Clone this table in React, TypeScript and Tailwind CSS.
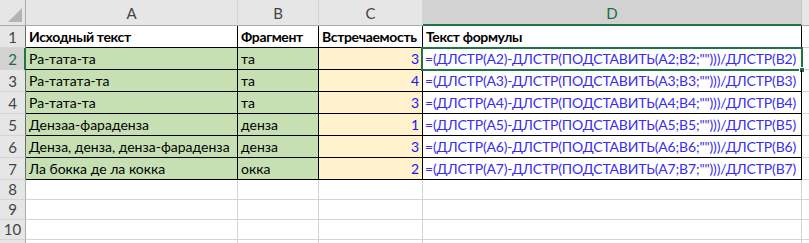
import React from "react";

type Row = { a: string; b: string; c: number; n: number };
const data: Row[] = [
  { a: "Ра-тата-та", b: "та", c: 3, n: 2 },
  { a: "Ра-татата-та", b: "та", c: 4, n: 3 },
  { a: "Ра-тата-та", b: "та", c: 3, n: 4 },
  { a: "Дензаа-фараденза", b: "денза", c: 1, n: 5 },
  { a: "Денза, денза, денза-фараденза", b: "денза", c: 3, n: 6 },
  { a: "Ла бокка де ла кокка", b: "окка", c: 2, n: 7 },
];

function RowHeader({ n, selected, table, h }: { n?: number; selected?: boolean; table?: boolean; h: string }) {
  return (
    <div
      className={`relative w-[26px] shrink-0 ${h} flex items-end justify-center border-b border-b-[#d4d4d4] border-r ${
        table ? "border-r-[#6b6b6b]" : "border-r-[#ababab]"
      } ${selected ? "bg-[#d2d2d2] text-[#1e6b41]" : "bg-[#e6e6e6] text-[#444]"} text-[15px] leading-[18px] pb-[1px]`}
    >
      {n}
      {selected && <div className="absolute right-[-1px] top-0 bottom-[-1px] w-[2px] bg-[#217346]" />}
    </div>
  );
}

const headCell = "shrink-0 border-r border-b border-black flex items-end pl-[3px] pb-[1px] leading-[18px] font-bold tracking-[-0.35px] whitespace-nowrap";

export default function App() {
  return (
    <div className="w-[809px] h-[243px] overflow-hidden bg-white [font-family:Lato,sans-serif] text-[14px] text-black select-none">
      {/* column headers */}
      <div className="flex h-[26px] text-[15px]">
        <div className="relative w-[26px] shrink-0 bg-[#e6e6e6] border-r border-b border-[#ababab]">
          <div
            className="absolute right-[3px] bottom-[3px] w-[14px] h-[14px] bg-[#b4b4b4]"
            style={{ clipPath: "polygon(100% 0, 100% 100%, 0 100%)" }}
          />
        </div>
        {[
          ["A", "w-[212px]"],
          ["B", "w-[81px]"],
          ["C", "w-[104px]"],
        ].map(([l, w]) => (
          <div
            key={l}
            className={`${w} shrink-0 bg-[#e6e6e6] border-r border-r-[#d4d4d4] border-b border-b-[#ababab] flex items-center justify-center text-[#444] pt-[2px]`}
          >
            {l}
          </div>
        ))}
        <div className="w-[379px] shrink-0 bg-[#d2d2d2] border-r border-r-[#c6c6c6] border-b-2 border-b-[#217346] flex items-center justify-center text-[#1e6b41] pt-[3px]">
          D
        </div>
        <div className="flex-1 bg-[#e6e6e6] border-b border-b-[#ababab]" />
      </div>

      {/* row 1 */}
      <div className="flex h-[22px]">
        <RowHeader n={1} table h="h-[22px]" />
        <div className={`w-[212px] ${headCell}`}>Исходный текст</div>
        <div className={`w-[81px] ${headCell}`}>Фрагмент</div>
        <div className={`w-[104px] ${headCell}`}>Встречаемость</div>
        <div className={`w-[379px] ${headCell}`}>Текст формулы</div>
        <div className="flex-1 border-b border-[#d4d4d4]" />
      </div>

      {data.map((r) => (
        <div key={r.n} className="flex h-[22px]">
          <RowHeader n={r.n} table selected={r.n === 2} h="h-[22px]" />
          <div className="w-[212px] shrink-0 bg-[#c6e0b4] border-r border-b border-black flex items-end pl-[3px] pb-[1px] leading-[18px] whitespace-nowrap">
            {r.a}
          </div>
          <div className="w-[81px] shrink-0 bg-[#c6e0b4] border-r border-b border-black flex items-end pl-[3px] pb-[1px] leading-[18px]">
            {r.b}
          </div>
          <div className="w-[104px] shrink-0 bg-[#fff2cc] border-r border-b border-black flex items-end justify-end pr-[3px] pb-[1px] leading-[18px] text-[#1414ff]">
            {r.c}
          </div>
          <div className="relative w-[379px] shrink-0 border-r border-b border-black flex items-end pl-[2px] pb-[1px] leading-[18px] text-[#3a2cf0] whitespace-nowrap tracking-[-0.16px]">
            {`=(ДЛСТР(A${r.n})-ДЛСТР(ПОДСТАВИТЬ(A${r.n};B${r.n};"")))/ДЛСТР(B${r.n})`}
            {r.n === 2 && (
              <>
                <div className="absolute left-[-2px] right-[-2px] top-[-1px] bottom-[-2px] border-2 border-[#217346]" />
                <div className="absolute right-[-4px] bottom-[-4px] w-[6px] h-[6px] bg-[#217346] border border-white" />
              </>
            )}
          </div>
          <div className="flex-1 border-b border-[#d4d4d4]" />
        </div>
      ))}

      {[8, 9, 10, 0].map((n) => (
        <div key={n} className="flex h-[20px]">
          <RowHeader n={n || undefined} h="h-[20px]" />
          <div className="w-[212px] shrink-0 border-r border-b border-[#d4d4d4]" />
          <div className="w-[81px] shrink-0 border-r border-b border-[#d4d4d4]" />
          <div className="w-[104px] shrink-0 border-r border-b border-[#d4d4d4]" />
          <div className="w-[379px] shrink-0 border-r border-b border-[#d4d4d4]" />
          <div className="flex-1 border-b border-[#d4d4d4]" />
        </div>
      ))}
    </div>
  );
}
